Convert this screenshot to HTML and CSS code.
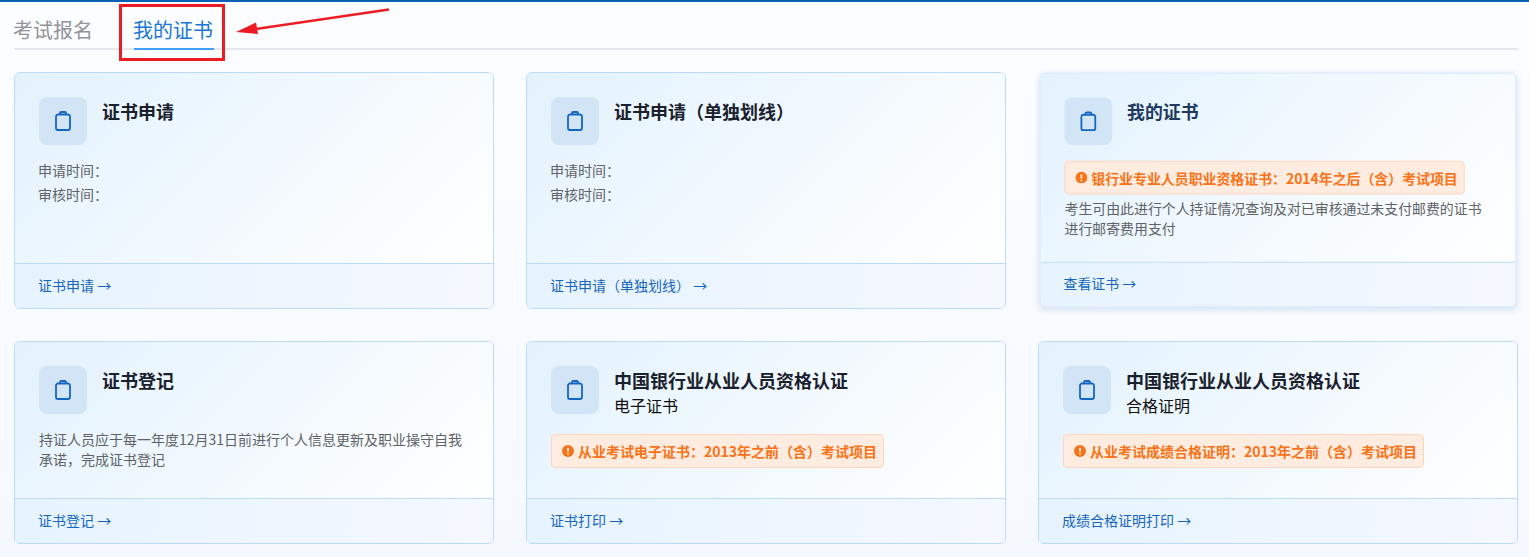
FILE: index.html
```html
<!DOCTYPE html>
<html lang="zh-CN">
<head>
<meta charset="utf-8">
<title>我的证书</title>
<link rel="stylesheet" href="styles.css">
</head>
<body>
<svg width="0" height="0" class="defs">
  <symbol id="clip" viewBox="0 0 24 24"><path d="M9 5.500H7a2 2 0 0 0-2 2V19a2 2 0 0 0 2 2h10a2 2 0 0 0 2-2V7.500a2 2 0 0 0-2-2h-2M9 5.500V4.300A1.300 1.300 0 0 1 10.300 3h3.400A1.300 1.300 0 0 1 15 4.300v1.200M9 5.500h6" fill="none" stroke="currentColor" stroke-width="1.800" stroke-linecap="round" stroke-linejoin="round"/></symbol>
  <symbol id="warn" viewBox="0 0 12 12"><circle cx="6" cy="6" r="6" fill="currentColor"/><rect x="5.100" y="2.500" width="1.800" height="4.500" rx=".9" fill="#ffece1"/><circle cx="6" cy="8.800" r="1" fill="#ffece1"/></symbol>
</svg>
<div class="topbar"></div>
<main class="page">
  <nav class="tabs">
    <a class="tab">考试报名</a>
    <a class="tab tab-active">我的证书</a>
  </nav>
  <section class="grid">
    <article class="card">
      <div class="card-body">
        <div class="head">
          <span class="icon"><svg class="icon-svg"><use href="#clip"/></svg></span>
          <div class="titles"><h3 class="title">证书申请</h3></div>
        </div>
        <div class="meta"><div>申请时间：</div><div>审核时间：</div></div>
      </div>
      <div class="card-foot"><a class="link">证书申请 →</a></div>
    </article>
    <article class="card">
      <div class="card-body">
        <div class="head">
          <span class="icon"><svg class="icon-svg"><use href="#clip"/></svg></span>
          <div class="titles"><h3 class="title">证书申请（单独划线）</h3></div>
        </div>
        <div class="meta"><div>申请时间：</div><div>审核时间：</div></div>
      </div>
      <div class="card-foot"><a class="link">证书申请（单独划线） →</a></div>
    </article>
    <article class="card card-hover">
      <div class="card-body">
        <div class="head">
          <span class="icon"><svg class="icon-svg"><use href="#clip"/></svg></span>
          <div class="titles"><h3 class="title title-hover">我的证书</h3></div>
        </div>
        <div class="tag"><svg class="tag-icon"><use href="#warn"/></svg>银行业专业人员职业资格证书：2014年之后（含）考试项目</div>
        <p class="desc desc-after-tag">考生可由此进行个人持证情况查询及对已审核通过未支付邮费的证书进行邮寄费用支付</p>
      </div>
      <div class="card-foot"><a class="link">查看证书 →</a></div>
    </article>
    <article class="card">
      <div class="card-body">
        <div class="head">
          <span class="icon"><svg class="icon-svg"><use href="#clip"/></svg></span>
          <div class="titles"><h3 class="title">证书登记</h3></div>
        </div>
        <p class="desc desc-first">持证人员应于每一年度12月31日前进行个人信息更新及职业操守自我承诺，完成证书登记</p>
      </div>
      <div class="card-foot"><a class="link">证书登记 →</a></div>
    </article>
    <article class="card">
      <div class="card-body">
        <div class="head">
          <span class="icon"><svg class="icon-svg"><use href="#clip"/></svg></span>
          <div class="titles"><h3 class="title">中国银行业从业人员资格认证</h3><div class="sub">电子证书</div></div>
        </div>
        <div class="tag"><svg class="tag-icon"><use href="#warn"/></svg>从业考试电子证书：2013年之前（含）考试项目</div>
      </div>
      <div class="card-foot"><a class="link">证书打印 →</a></div>
    </article>
    <article class="card">
      <div class="card-body">
        <div class="head">
          <span class="icon"><svg class="icon-svg"><use href="#clip"/></svg></span>
          <div class="titles"><h3 class="title">中国银行业从业人员资格认证</h3><div class="sub">合格证明</div></div>
        </div>
        <div class="tag"><svg class="tag-icon"><use href="#warn"/></svg>从业考试成绩合格证明：2013年之前（含）考试项目</div>
      </div>
      <div class="card-foot"><a class="link">成绩合格证明打印 →</a></div>
    </article>
  </section>
</main>
<div class="mark-box"></div>
<svg class="mark-arrow" width="170" height="40" viewBox="0 0 170 40"><path d="M154 1.500L18 21.500" stroke="#ed1c24" stroke-width="2.500" fill="none"/><path d="M1 24L21 14.500L23 26Z" fill="#ed1c24"/></svg>
</body>
</html>
```

FILE: styles.css
```css
* { box-sizing: border-box; }
html, body { margin: 0; padding: 0; height: 100%; overflow: hidden; }
body {
  position: relative;
  background: linear-gradient(180deg, #fcfdff 0%, #f5f9ff 100%);
  font-family: "Noto Sans CJK SC", "Noto Sans", sans-serif;
  color: #606266;
}
.defs { position: absolute; }
.topbar { height: 2px; background: #0b5fb5; }
.page { padding: 8px 11px 0 14px; }
.tabs {
  display: flex;
  gap: 40px;
  height: 40px;
  border-bottom: 2px solid #e4e7ed;
}
.tab {
  height: 40px;
  padding-right: 1px;
  font-size: 20px;
  line-height: 40px;
  text-indent: -1px;
  color: #909399;
}
.tab-active { color: #1a76d2; border-bottom: 2px solid #409eff; }
.grid {
  display: grid;
  grid-template-columns: repeat(3, 480px);
  gap: 32px;
  margin-top: 22px;
}
.card {
  display: flex;
  flex-direction: column;
  border: 1px solid #b9ddf9;
  border-radius: 6px;
  overflow: hidden;
}
.card-hover {
  transform: translateY(-.5px) scale(.993, .99);
  border-color: #cfe6fb;
  box-shadow: 0 2px 6px rgba(60, 110, 170, .18);
}
.card-body {
  flex: 1;
  padding: 24px;
  background: linear-gradient(135deg, #e3f2fd 0%, #fff 100%);
}
.head { display: flex; gap: 15px; align-items: flex-start; }
.icon {
  flex: none;
  display: flex;
  align-items: center;
  justify-content: center;
  width: 48px;
  height: 48px;
  border-radius: 8px;
  background: #d2e5f7;
  color: #1565c0;
}
.icon-svg { width: 24px; height: 24px; }
.title { margin: 0; font-size: 18px; font-weight: 700; line-height: 28px; color: #1a202c; }
.title-hover { color: #1e3a5f; }
.sub { margin-bottom: 2px; font-size: 16px; line-height: 22px; color: #111; }
.meta { margin: 13px 0 0 -1px; font-size: 14px; line-height: 24px; }
.tag {
  display: flex;
  align-items: center;
  width: fit-content;
  height: 34px;
  margin: 16px 0 6px;
  padding: 0 6px 0 10px;
  border: 1px solid #fdd5bd;
  border-radius: 4px;
  background: #ffece1;
  color: #f97316;
  font-size: 14px;
  font-weight: 700;
  white-space: nowrap;
}
.tag-icon { flex: none; width: 12px; height: 12px; margin-right: 4px; }
.desc { margin: 0; font-size: 14px; line-height: 20px; }
.desc-first { margin-top: 15px; }
.desc-after-tag { margin: -2px 0 0; }
.card-foot {
  flex: none;
  height: 45px;
  padding: 0 24px;
  border-top: 1px solid #b9ddf9;
  background: linear-gradient(100deg, #e6f3fe 0%, #f5f8ff 100%);
  font-size: 14px;
  line-height: 42px;
}
.link { margin-left: -1px; color: #1565c0; }
.mark-box {
  position: absolute;
  left: 119px;
  top: 4px;
  width: 106px;
  height: 57px;
  border: 3px solid #ed1c24;
}
.mark-arrow { position: absolute; left: 235px; top: 8px; }
```
